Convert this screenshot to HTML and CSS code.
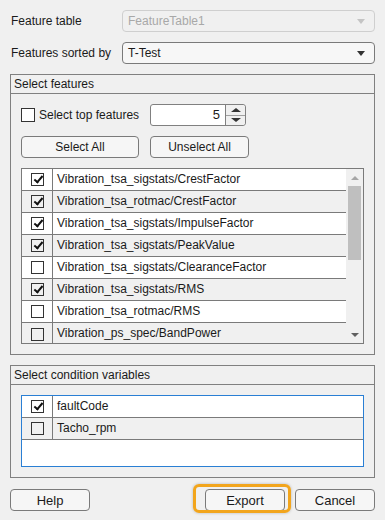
FILE: index.html
```html
<!DOCTYPE html>
<html lang="en">
<head>
    <meta charset="UTF-8">
    <title>Export Features</title>
    <link rel="stylesheet" href="styles.css">
</head>
<body>
    <div class="dialog">
        <!-- Top selectors -->
        <div class="field-row">
            <label class="field-label">Feature table</label>
            <div class="dropdown disabled">
                <span>FeatureTable1</span>
                <span class="caret"></span>
            </div>
        </div>
        <div class="field-row">
            <label class="field-label">Features sorted by</label>
            <div class="dropdown">
                <span>T-Test</span>
                <span class="caret"></span>
            </div>
        </div>

        <!-- Select features panel -->
        <div class="panel">
            <div class="panel-title">Select features</div>
            <div class="panel-body">
                <div class="top-row">
                    <label class="check-label">
                        <span class="box"></span>
                        Select top features
                    </label>
                    <div class="spinner">
                        <span class="spinner-value">5</span>
                        <span class="spinner-arrows">
                            <span class="arrow-up"></span>
                            <span class="arrow-down"></span>
                        </span>
                    </div>
                </div>
                <div class="btn-row">
                    <button class="btn btn-select">Select All</button>
                    <button class="btn btn-unselect">Unselect All</button>
                </div>
                <div class="table features-table">
                    <div class="rows">
                        <div class="row"><span class="cell-check"><span class="box checked"></span></span><span class="cell-text">Vibration_tsa_sigstats/CrestFactor</span></div>
                        <div class="row"><span class="cell-check"><span class="box checked"></span></span><span class="cell-text">Vibration_tsa_rotmac/CrestFactor</span></div>
                        <div class="row"><span class="cell-check"><span class="box checked"></span></span><span class="cell-text">Vibration_tsa_sigstats/ImpulseFactor</span></div>
                        <div class="row"><span class="cell-check"><span class="box checked"></span></span><span class="cell-text">Vibration_tsa_sigstats/PeakValue</span></div>
                        <div class="row"><span class="cell-check"><span class="box"></span></span><span class="cell-text">Vibration_tsa_sigstats/ClearanceFactor</span></div>
                        <div class="row"><span class="cell-check"><span class="box checked"></span></span><span class="cell-text">Vibration_tsa_sigstats/RMS</span></div>
                        <div class="row"><span class="cell-check"><span class="box"></span></span><span class="cell-text">Vibration_tsa_rotmac/RMS</span></div>
                        <div class="row"><span class="cell-check"><span class="box"></span></span><span class="cell-text">Vibration_ps_spec/BandPower</span></div>
                    </div>
                    <div class="scrollbar">
                        <span class="scroll-up"></span>
                        <span class="scroll-thumb"></span>
                        <span class="scroll-down"></span>
                    </div>
                </div>
            </div>
        </div>

        <!-- Select condition variables panel -->
        <div class="panel">
            <div class="panel-title">Select condition variables</div>
            <div class="panel-body">
                <div class="table condition-table">
                    <div class="rows">
                        <div class="row"><span class="cell-check"><span class="box checked"></span></span><span class="cell-text">faultCode</span></div>
                        <div class="row"><span class="cell-check"><span class="box"></span></span><span class="cell-text">Tacho_rpm</span></div>
                    </div>
                </div>
            </div>
        </div>

        <!-- Footer buttons -->
        <div class="footer">
            <button class="btn btn-footer">Help</button>
            <div class="footer-right">
                <button class="btn btn-footer focused">Export</button>
                <button class="btn btn-footer">Cancel</button>
            </div>
        </div>
    </div>
</body>
</html>
```

FILE: styles.css
```css
* {
    box-sizing: border-box;
}

body {
    margin: 0;
    background-color: #f0f0f0;
    font-family: 'Liberation Sans', Arial, sans-serif;
    font-size: 12px;
    color: #1a1a1a;
}

.dialog {
    padding: 10px;
    display: flex;
    flex-direction: column;
    gap: 10px;
    width: 385px;
    height: 520px;
}

/* Top selectors */
.field-row {
    display: flex;
    align-items: center;
    height: 22px;
}

.field-label {
    width: 112px;
    padding-left: 1px;
}

.dropdown {
    flex: 1;
    height: 22px;
    border: 1px solid #7a7a7a;
    border-radius: 4px;
    background-color: #f7f7f7;
    display: flex;
    align-items: center;
    justify-content: space-between;
    padding: 0 9px 0 5px;
}

.dropdown.disabled {
    border-color: #cfcfcf;
    background-color: #f0f0f0;
    color: #a8a8a8;
}

.caret {
    width: 0;
    height: 0;
    border-left: 4px solid transparent;
    border-right: 4px solid transparent;
    border-top: 5px solid #333;
}

.dropdown.disabled .caret {
    border-top-color: #c4c4c4;
}

/* Panels */
.panel {
    border: 1px solid #808080;
}

.panel-title {
    height: 19px;
    line-height: 18px;
    padding-left: 3px;
    border-bottom: 1px solid #808080;
}

.panel-body {
    padding: 10px;
    display: flex;
    flex-direction: column;
    gap: 10px;
}

.top-row {
    display: flex;
    align-items: center;
    height: 22px;
}

.check-label {
    display: flex;
    align-items: center;
    gap: 4px;
    width: 129px;
}

.box {
    display: inline-block;
    width: 14px;
    height: 14px;
    border: 1px solid #333;
    background-color: #fff;
    position: relative;
}

.box.checked::after {
    content: "";
    position: absolute;
    left: 4px;
    top: 0px;
    width: 3px;
    height: 7px;
    border-right: 2px solid #111;
    border-bottom: 2px solid #111;
    transform: rotate(40deg);
}

/* Numeric spinner */
.spinner {
    width: 96px;
    height: 22px;
    border: 1px solid #808080;
    border-radius: 3px;
    background-color: #fff;
    display: flex;
}

.spinner-value {
    flex: 1;
    text-align: right;
    padding-right: 5px;
    line-height: 20px;
    font-size: 13px;
}

.spinner-arrows {
    width: 20px;
    border-left: 1px solid #808080;
    background-color: #f0f0f0;
    border-radius: 0 3px 3px 0;
    display: flex;
    flex-direction: column;
}

.arrow-up,
.arrow-down {
    flex: 1;
    display: flex;
    align-items: center;
    justify-content: center;
}

.arrow-up {
    border-bottom: 1px solid #a0a0a0;
}

.arrow-up::before,
.arrow-down::before {
    content: "";
    border-left: 5px solid transparent;
    border-right: 5px solid transparent;
}

.arrow-up::before {
    border-bottom: 4px solid #333;
}

.arrow-down::before {
    border-top: 4px solid #333;
}

/* Buttons */
.btn-row {
    display: flex;
    gap: 11px;
    height: 22px;
}

.btn {
    font-family: 'Liberation Sans', Arial, sans-serif;
    font-size: 12px;
    color: #1a1a1a;
    height: 22px;
    border: 1px solid #7a7a7a;
    border-radius: 4px;
    background-color: #f6f6f6;
    padding: 0;
}

.btn-select {
    width: 118px;
}

.btn-unselect {
    width: 99px;
}

/* Tables */
.table {
    border: 1px solid #7a7a7a;
    background-color: #fff;
    display: flex;
    overflow: hidden;
}

.features-table {
    height: 176px;
}

.condition-table {
    height: 72px;
    border-color: #2a7fd4;
}

.rows {
    flex: 1;
}

.row {
    display: flex;
    height: 22px;
    border-bottom: 1px solid #7a7a7a;
}

.row:nth-child(even) {
    background-color: #f0f0f0;
}

.features-table .row:last-child {
    border-bottom: none;
}

.cell-check {
    width: 31px;
    border-right: 1px solid #7a7a7a;
    display: flex;
    align-items: center;
    justify-content: center;
}

.cell-check .box {
    width: 13px;
    height: 13px;
    background-color: transparent;
}

.cell-text {
    padding-left: 4px;
    line-height: 21px;
}

/* Scrollbar */
.scrollbar {
    width: 17px;
    background-color: #f0f0f0;
    display: flex;
    flex-direction: column;
    align-items: center;
}

.scroll-up,
.scroll-down {
    height: 17px;
    display: flex;
    align-items: center;
    justify-content: center;
}

.scroll-up::before {
    content: "";
    border-left: 4px solid transparent;
    border-right: 4px solid transparent;
    border-bottom: 4px solid #a6a6a6;
}

.scroll-down::before {
    content: "";
    border-left: 4px solid transparent;
    border-right: 4px solid transparent;
    border-top: 4px solid #606060;
}

.scroll-thumb {
    width: 13px;
    height: 74px;
    background-color: #bfbfbf;
}

.scroll-down {
    margin-top: auto;
}

/* Footer */
.footer {
    display: flex;
    justify-content: space-between;
    margin-top: 1px;
}

.footer-right {
    display: flex;
    gap: 10px;
}

.btn-footer {
    width: 80px;
    font-size: 13px;
}

.focused {
    position: relative;
}

.focused::before {
    content: "";
    position: absolute;
    left: -13px;
    right: -7px;
    top: -6px;
    bottom: -3px;
    border: 3px solid #f2a51c;
    border-radius: 6px;
    box-shadow: 0 0 3px rgba(0, 0, 0, 0.25);
}
```
